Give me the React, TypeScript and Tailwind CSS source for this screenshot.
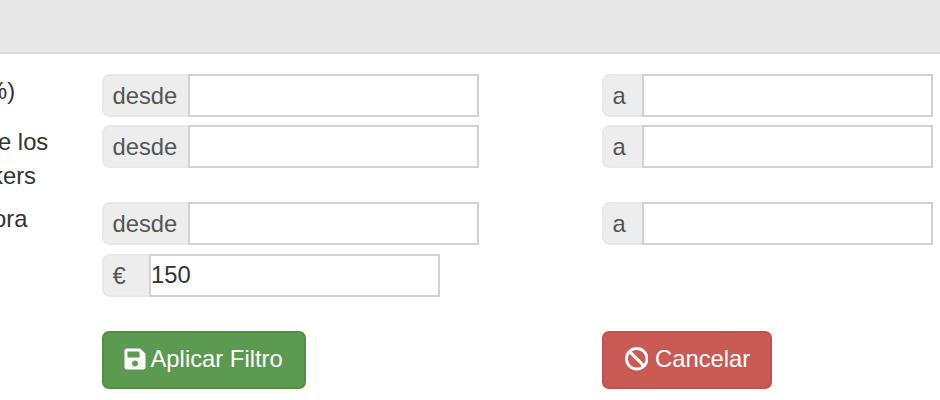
import { FaSave } from "react-icons/fa";
import { FaBan } from "react-icons/fa6";
import clsx from "clsx";

type FieldProps = {
  prefix: string;
  addonClass: string;
  value?: string;
};

function Field({ prefix, addonClass, value = "" }: FieldProps) {
  return (
    <div className="flex h-[43px]">
      <span
        className={clsx(
          "flex shrink-0 items-center rounded-l-[8px] border-2 border-r-0 border-[#e8e8e8] bg-[#ededed] pl-[8.5px] pt-px text-[#555]",
          addonClass,
        )}
      >
        {prefix}
      </span>
      <input
        type="text"
        defaultValue={value}
        className="w-[290.5px] border-2 border-[#d2d2d2] bg-white pb-[2px] text-[#333] outline-none"
      />
    </div>
  );
}

function Range() {
  return (
    <>
      <div className="w-[500px] shrink-0">
        <Field prefix="desde" addonClass="w-[86px]" />
      </div>
      <Field prefix="a" addonClass="w-[40px]" />
    </>
  );
}

export default function App() {
  return (
    <div className="h-[400px] w-[940px] overflow-hidden bg-white font-['Liberation_Sans',Arial,sans-serif] text-[23.8px] text-[#333]">
      <div className="h-[54px] border-b-2 border-[#dcdcdc] bg-[#e8e8e8]" />
      <form className="pt-5">
        <div className="flex h-[51px]">
          <div className="w-[102px] shrink-0 whitespace-nowrap leading-[34px]">
            <span className="-ml-[14px]">%)</span>
          </div>
          <Range />
        </div>
        <div className="flex h-[77px]">
          <div className="flex w-[102px] shrink-0 flex-col whitespace-nowrap leading-[34px]">
            <span className="-ml-[2px]">e los</span>
            <span className="-ml-[9px]">kers</span>
          </div>
          <Range />
        </div>
        <div className="flex h-[52px]">
          <div className="w-[102px] shrink-0 whitespace-nowrap leading-[34px]">
            <span className="-ml-[7px]">ora</span>
          </div>
          <Range />
        </div>
        <div className="flex h-[77px] pl-[102px]">
          <Field prefix="€" addonClass="w-[47px]" value="150" />
        </div>
        <div className="flex pl-[102px] text-white">
          <div className="w-[500px]">
            <button
              type="button"
              className="flex h-[58px] w-[204px] items-center rounded-[7px] border-2 border-[#51903f] bg-[#5b9a50] pb-[2px] pl-[18.5px]"
            >
              <FaSave className="mr-[4px] size-[24px]" />
              Aplicar Filtro
            </button>
          </div>
          <button
            type="button"
            className="flex h-[58px] w-[170px] items-center rounded-[7px] border-2 border-[#c2504b] bg-[#c95b54] pb-[2px] pl-[20.5px]"
          >
            <FaBan className="mr-[7px] size-[23.5px]" />
            Cancelar
          </button>
        </div>
      </form>
    </div>
  );
}
